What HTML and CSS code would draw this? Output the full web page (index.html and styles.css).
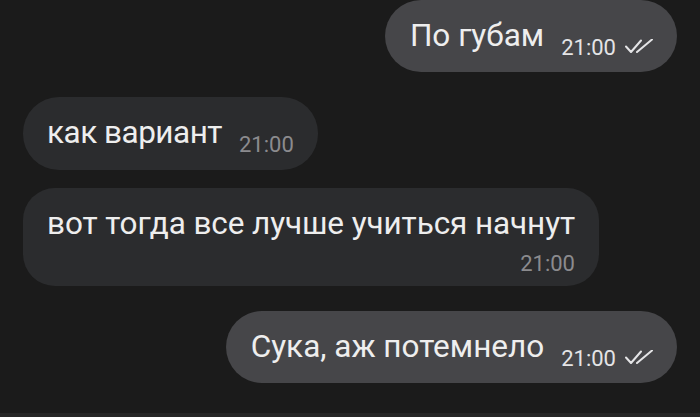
FILE: index.html
```html
<!DOCTYPE html>
<html lang="ru">
<head>
    <meta charset="UTF-8">
    <meta name="viewport" content="width=device-width, initial-scale=1.0">
    <title>Чат</title>
    <link rel="stylesheet" href="styles.css">
</head>
<body>
    <div class="chat">
        <div class="bubble out">
            <span class="text">По губам</span><span class="meta">21:00<svg class="ticks" width="28" height="14" viewBox="0 0 28 14"><path d="M1 7.5 L6 13 L16 1.5 M12 13 L27 0.5"/></svg></span>
        </div>

        <div class="bubble in new-group">
            <span class="text tight">как вариант</span><span class="meta">21:00</span>
        </div>

        <div class="bubble in wrap">
            <span class="text">вот тогда все лучше учиться начнут</span>
            <span class="meta">21:00</span>
        </div>

        <div class="bubble out new-group">
            <span class="text">Сука, аж потемнело</span><span class="meta">21:00<svg class="ticks" width="28" height="14" viewBox="0 0 28 14"><path d="M1 7.5 L6 13 L16 1.5 M12 13 L27 0.5"/></svg></span>
        </div>
    </div>
</body>
</html>
```

FILE: styles.css
```css
* {
    margin: 0;
    padding: 0;
    box-sizing: border-box;
}

body {
    height: 100vh;
    background-color: #1b1b1b;
    font-family: Roboto, "Noto Sans", sans-serif;
    color: #eeeeee;
    overflow: hidden;
    border-bottom: 4px solid #262626;
}

.chat {
    display: flex;
    flex-direction: column;
    padding: 0 23px;
}

.bubble {
    margin-top: 18px;
    padding: 18px 24px 18px 25px;
    font-size: 31.5px;
    line-height: 36px;
    border-radius: 36px;
    white-space: nowrap;
}

.bubble:first-child {
    margin-top: 0;
}

.bubble.new-group {
    margin-top: 25px;
}

.bubble.out {
    align-self: flex-end;
    background-color: #464649;
}

.bubble.in {
    align-self: flex-start;
    padding: 18px 24px 19px;
    background-color: #2b2c2e;
}

.in .text {
    letter-spacing: -0.1px;
}

.in .text.tight {
    letter-spacing: -0.5px;
}

.meta {
    margin-left: 17px;
    font-size: 22px;
    line-height: 10px;
    vertical-align: -9px;
    color: #8b8b8e;
}

.out .meta {
    color: #e4e4e6;
}

.ticks {
    margin-left: 9px;
    vertical-align: 2px;
    fill: none;
    stroke: #e4e4e6;
    stroke-width: 2;
    stroke-linecap: round;
    stroke-linejoin: round;
}

.bubble.wrap {
    padding-bottom: 11px;
    border-radius: 32px;
}

.wrap .meta {
    display: block;
    margin-top: 11px;
    line-height: 22px;
    text-align: right;
}
```
